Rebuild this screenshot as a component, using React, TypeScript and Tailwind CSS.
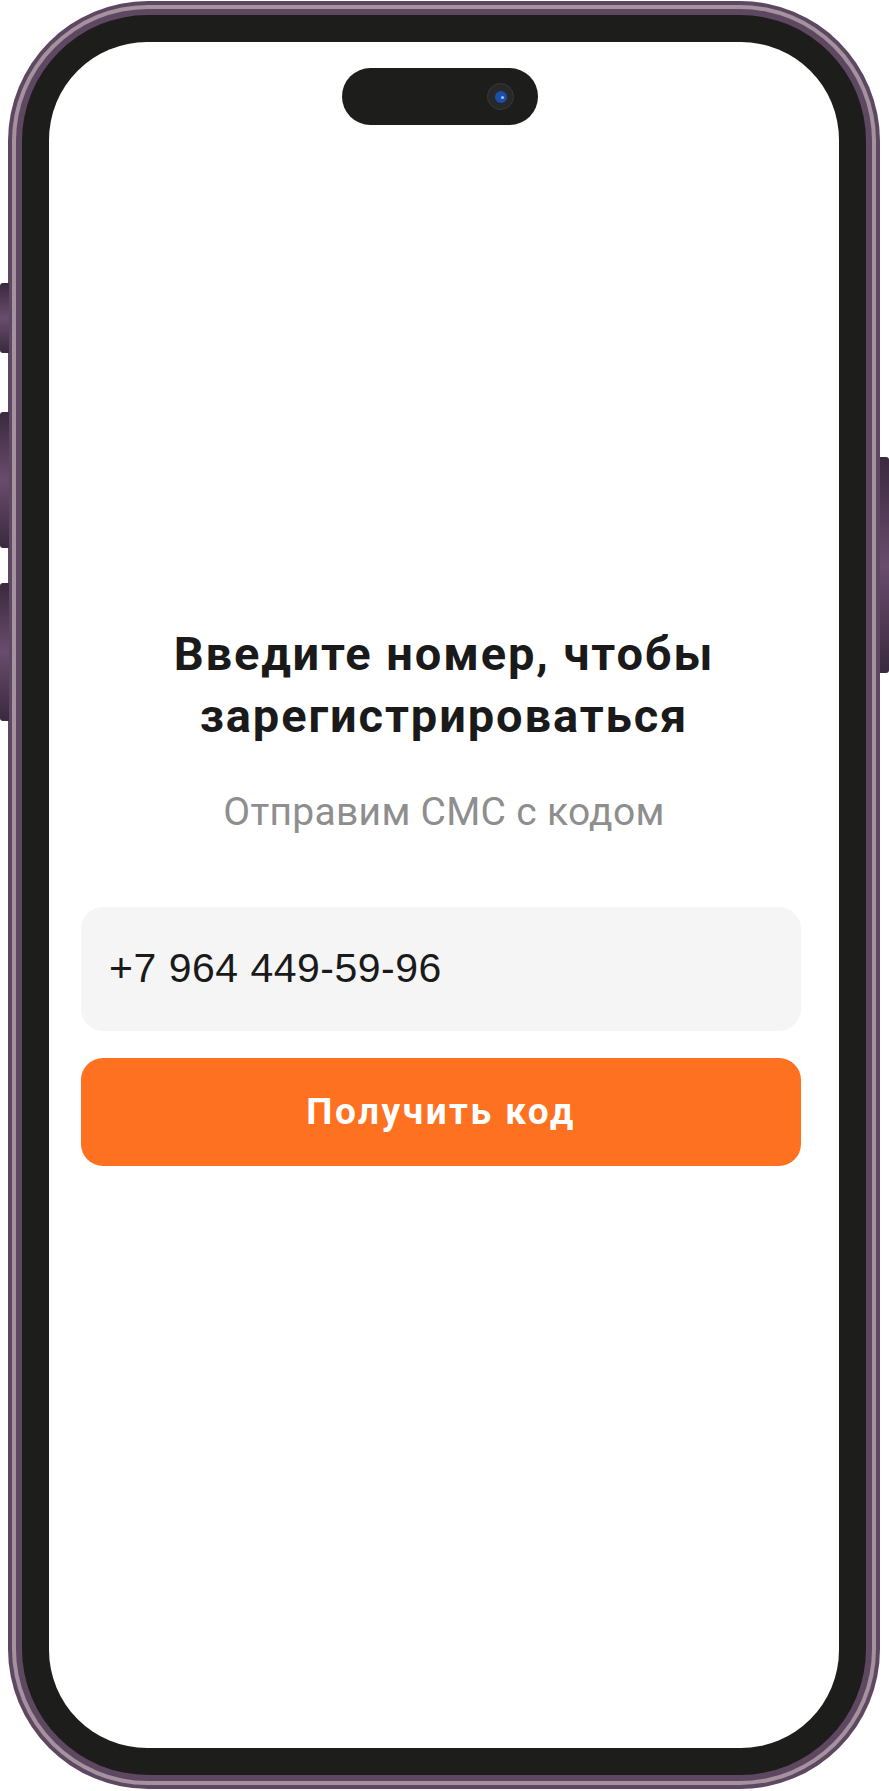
import React from "react";

const SideButton = ({ className }: { className: string }) => (
  <div
    className={`absolute w-[9px] bg-gradient-to-b from-[#3a2a3e] via-[#6a4c6d] to-[#3a2a3e] ${className}`}
  />
);

const Camera = () => (
  <div className="flex h-[27px] w-[27px] items-center justify-center rounded-full border border-[#3a3a3e] bg-[#28282b]">
    <div className="relative h-[12px] w-[12px] rounded-full bg-[#1a4fa8]">
      <div className="absolute left-[6px] top-[5px] h-[3px] w-[3px] rounded-full bg-[#9fc0ff]" />
    </div>
  </div>
);

export default function App() {
  return (
    <div className="relative h-[1791px] w-[889px] overflow-hidden bg-white">
      <SideButton className="left-0 top-[283px] h-[70px] rounded-l-[3px]" />
      <SideButton className="left-0 top-[412px] h-[136px] rounded-l-[3px]" />
      <SideButton className="left-0 top-[583px] h-[138px] rounded-l-[3px]" />
      <SideButton className="right-0 top-[457px] h-[216px] rounded-r-[3px]" />

      <div className="ml-[8px] mt-[1px] h-[1788px] w-[872px] rounded-[140px] bg-[#5e4760] p-[4px]">
        <div className="h-full w-full rounded-[136px] bg-[#a4929f] p-[4px]">
          <div className="h-full w-full rounded-[132px] bg-[#5e4760] p-[6px]">
            <div className="h-full w-full rounded-[126px] bg-[#1d1d1b] p-[27px]">
              <div className="relative h-full w-full overflow-hidden rounded-[98px] bg-white">
                <div className="absolute left-[293px] top-[26px] flex h-[57px] w-[196px] items-center justify-end rounded-full bg-[#1d1d1b] pr-[24px]">
                  <Camera />
                </div>

                <div className="flex flex-col items-center pt-[581px]">
                  <h1 className="text-center font-['Roboto',sans-serif] text-[47px] font-bold leading-[62px] tracking-[1.9px] text-[#1a1a1a]">
                    Введите номер, чтобы
                    <br />
                    зарегистрироваться
                  </h1>
                  <p className="mt-[43px] font-['Roboto',sans-serif] text-[39px] leading-[44px] tracking-[0.3px] text-[#8e8e8e]">
                    Отправим СМС с кодом
                  </p>
                </div>

                <div className="ml-[32px] mt-[73px] flex w-[720px] flex-col gap-[27px]">
                  <div className="flex h-[124px] items-center rounded-[22px] bg-[#f5f5f5] px-[28px]">
                    <span className="font-['Liberation_Sans',sans-serif] text-[41px] tracking-[0.5px] text-[#1a1a1a]">
                      +7 964 449-59-96
                    </span>
                  </div>
                  <button className="flex h-[108px] items-center justify-center rounded-[22px] bg-[#fe7121]">
                    <span className="font-['Roboto',sans-serif] text-[37px] font-bold tracking-[2.5px] text-white">
                      Получить код
                    </span>
                  </button>
                </div>
              </div>
            </div>
          </div>
        </div>
      </div>
    </div>
  );
}
